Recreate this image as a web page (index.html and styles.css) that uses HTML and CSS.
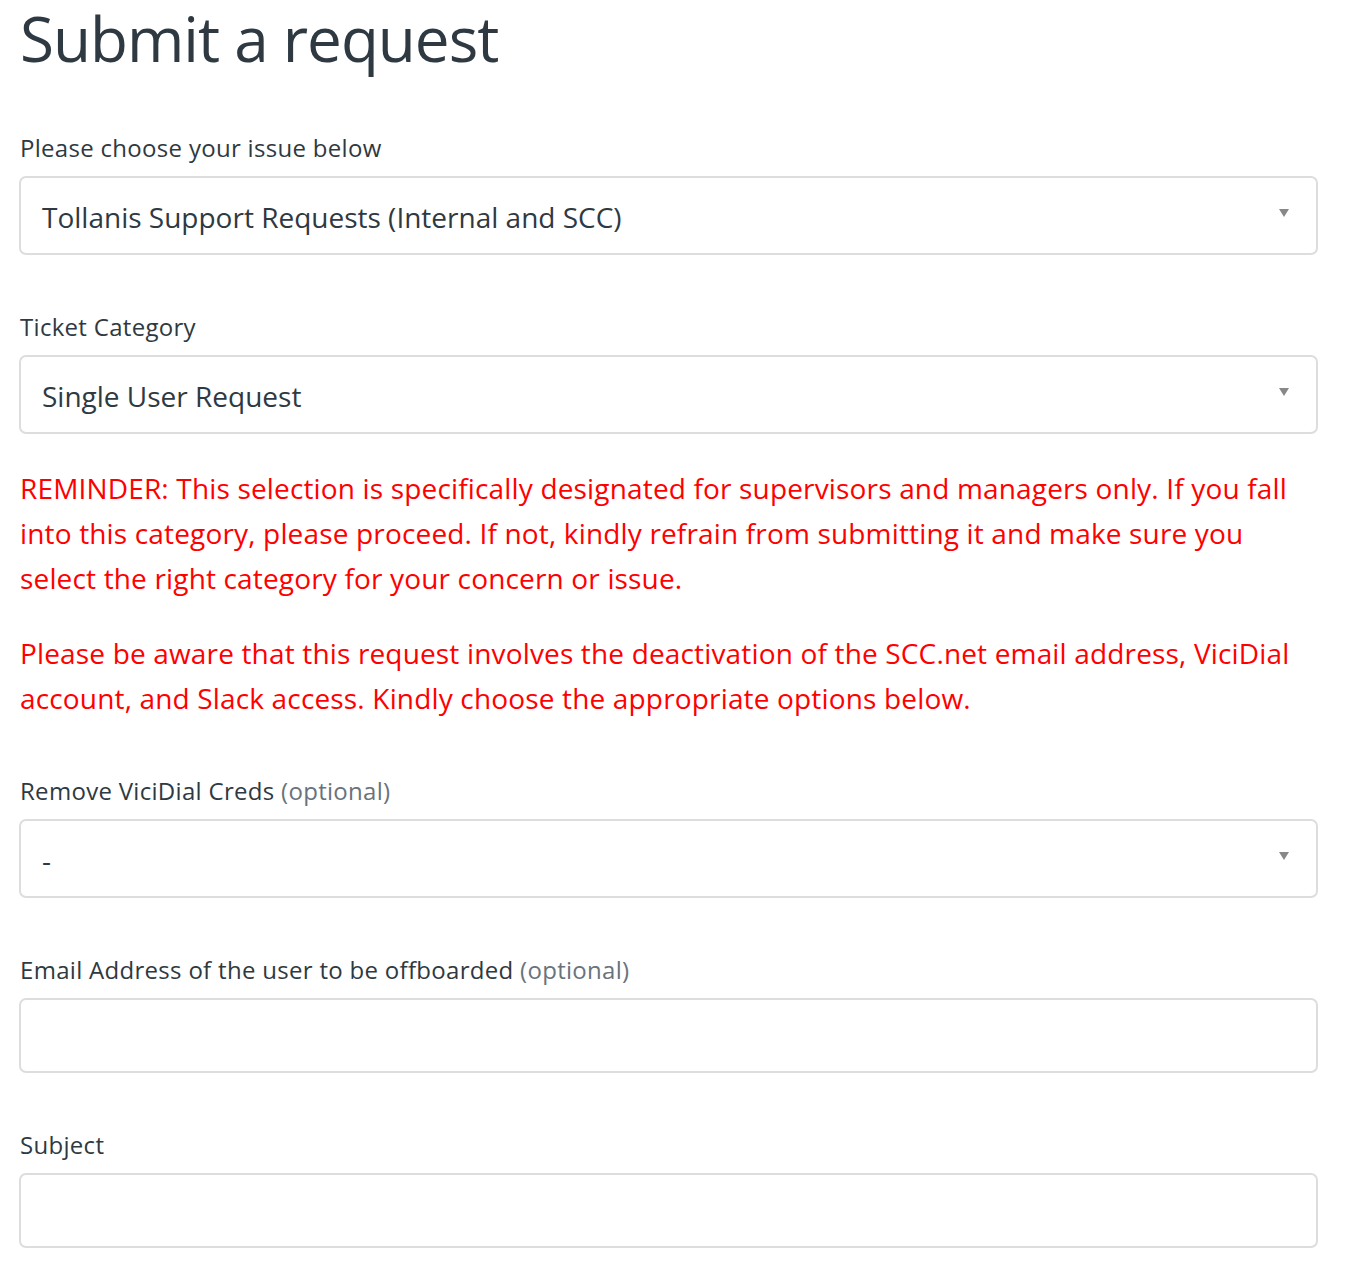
FILE: index.html
```html
<!DOCTYPE html>
<html lang="en">
<head>
<meta charset="utf-8">
<title>Submit a request</title>
<link rel="stylesheet" href="styles.css">
</head>
<body>
<main class="page">
  <h1 class="title">Submit a request</h1>
  <form class="form">
    <div class="field">
      <label class="label">Please choose your issue below</label>
      <div class="select"><span class="select-text">Tollanis Support Requests (Internal and SCC)</span><span class="caret"></span></div>
    </div>
    <div class="field">
      <label class="label">Ticket Category</label>
      <div class="select"><span class="select-text">Single User Request</span><span class="caret"></span></div>
    </div>
    <div class="notice">
      <p>REMINDER: This selection is specifically designated for supervisors and managers only. If you fall into this category, please proceed. If not, kindly refrain from submitting it and make sure you select the right category for your concern or issue.</p>
      <p>Please be aware that this request involves the deactivation of the SCC.net email address, ViciDial account, and Slack access. Kindly choose the appropriate options below.</p>
    </div>
    <div class="field">
      <label class="label">Remove ViciDial Creds <span class="optional">(optional)</span></label>
      <div class="select"><span class="select-text dash">-</span><span class="caret"></span></div>
    </div>
    <div class="field">
      <label class="label">Email Address of the user to be offboarded <span class="optional">(optional)</span></label>
      <div class="input"></div>
    </div>
    <div class="field">
      <label class="label">Subject</label>
      <div class="input"></div>
    </div>
  </form>
</main>
</body>
</html>
```
FILE: styles.css
```css
html, body {
  margin: 0;
  padding: 0;
  background: #fff;
}
body {
  font-family: "Open Sans", "Noto Sans", sans-serif;
  color: #2f3941;
}
.page {
  width: 1299px;
  margin-left: 19px;
}
.title {
  font-size: 62px;
  font-weight: 400;
  line-height: 76px;
  margin: 0 0 0 1px;
  letter-spacing: -1px;
}
.form {
  margin-top: 56px;
}
.field {
  margin-bottom: 56px;
}
.label {
  display: block;
  font-size: 24px;
  line-height: 32px;
  letter-spacing: 0.3px;
  margin: 0 0 12px 1px;
}
.optional {
  color: #68737d;
}
.select {
  box-sizing: border-box;
  height: 79px;
  border: 2px solid #ddd;
  border-radius: 7px;
  display: flex;
  align-items: center;
  padding: 3px 27px 0 21px;
  justify-content: space-between;
}
.select-text {
  font-size: 28px;
  color: #2f3941;
}
.caret {
  width: 0;
  height: 0;
  border-left: 5px solid transparent;
  border-right: 5px solid transparent;
  border-top: 8px solid #888;
  margin-top: -8px;
}
.input {
  box-sizing: border-box;
  height: 75px;
  border: 2px solid #ddd;
  border-radius: 7px;
}
.notice {
  color: #ff0000;
  font-size: 28px;
  line-height: 45px;
  letter-spacing: 0.16px;
  margin: -24px 0 54px 1px;
}
.notice p {
  margin: 0 0 30px 0;
}
.notice p:last-child {
  margin-bottom: 0;
}
```
